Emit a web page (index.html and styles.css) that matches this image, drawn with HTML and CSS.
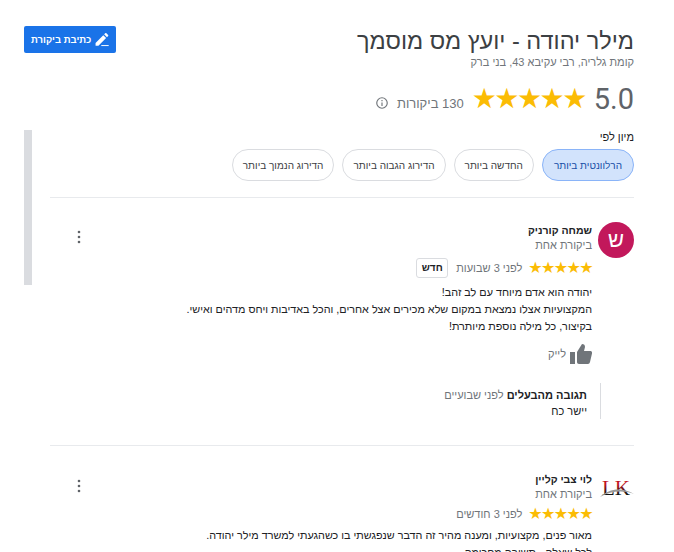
FILE: index.html
```html
<!DOCTYPE html>
<html lang="he" dir="rtl">
<head>
    <meta charset="UTF-8">
    <meta name="viewport" content="width=device-width, initial-scale=1.0">
    <title>מילר יהודה - ביקורות</title>
    <link rel="stylesheet" href="styles.css">
</head>
<body>

<div class="scroll-thumb"></div>

<div class="page">
    <header class="header">
        <div class="business">
            <h1 class="business-name">מילר יהודה - יועץ מס מוסמך</h1>
            <div class="business-address">קומת גלריה, רבי עקיבא 43, בני ברק</div>
            <div class="summary">
                <span class="score">5.0</span>
                <span class="stars stars-big">★★★★★</span>
                <span class="count">130 ביקורות</span>
                <svg class="info" width="14" height="14" viewBox="0 0 24 24" fill="#70757a"><path d="M11 7h2v2h-2zm0 4h2v6h-2zm1-9a10 10 0 1 0 0 20 10 10 0 0 0 0-20zm0 18a8 8 0 1 1 0-16 8 8 0 0 1 0 16z"/></svg>
            </div>
        </div>
        <a class="write-btn" href="#">
            <svg width="15" height="15" viewBox="0 0 24 24" fill="#fff"><path d="M1 23v-5L14.500 4.500l5 5L6 23zM16 3l2-2c.6-.6 1.400-.6 2 0l3 3c.6.600.6 1.400 0 2l-2 2z"/><path d="M11 21.800h13V23.500H11z"/></svg>
            <span>כתיבת ביקורת</span>
        </a>
    </header>

    <section class="sort">
        <div class="sort-label">מיון לפי</div>
        <div class="chips">
            <button class="chip chip-active">הרלוונטית ביותר</button>
            <button class="chip">החדשה ביותר</button>
            <button class="chip">הדירוג הגבוה ביותר</button>
            <button class="chip">הדירוג הנמוך ביותר</button>
        </div>
    </section>

    <article class="review">
        <div class="review-head">
            <div class="avatar avatar-letter">ש</div>
            <div class="review-meta">
                <div class="author">שמחה קורניק</div>
                <div class="author-sub">ביקורת אחת</div>
                <div class="rating-row">
                    <span class="stars">★★★★★</span>
                    <span class="when">לפני 3 שבועות</span>
                    <span class="new-badge">חדש</span>
                </div>
            </div>
            <svg class="more" width="4" height="14" viewBox="0 0 4 14" fill="#5f6368"><circle cx="2" cy="2" r="1.300"/><circle cx="2" cy="7" r="1.300"/><circle cx="2" cy="12" r="1.300"/></svg>
        </div>
        <p class="review-text">יהודה הוא אדם מיוחד עם לב זהב!<br>המקצועיות אצלו נמצאת במקום שלא מכירים אצל אחרים, והכל באדיבות ויחס מדהים ואישי.<br>בקיצור, כל מילה נוספת מיותרת!</p>
        <div class="like">
            <svg width="22" height="20" viewBox="0 0 22 20" fill="#70757a"><path d="M0 8h5v12H0zM7 8l5-8c2 0 3 1 3 3l-1 4h6c1.500 0 2.300 1 2 2.500l-2 8.500c-.3 1-1 2-2 2H9c-1.200 0-2-1-2-2z"/></svg>
            <span>לייק</span>
        </div>
        <div class="owner-reply">
            <div><b>תגובה מהבעלים</b> <span class="when">לפני שבועיים</span></div>
            <div>יישר כח</div>
        </div>
    </article>

    <article class="review">
        <div class="review-head">
            <div class="avatar avatar-logo">
                <svg width="36" height="36" viewBox="0 0 36 36">
                    <defs>
                        <linearGradient id="lk-fill" x1="0" y1="0" x2="0" y2="1">
                            <stop offset="0.350" stop-color="#c1121f"/>
                            <stop offset="0.750" stop-color="#111"/>
                        </linearGradient>
                    </defs>
                    <text x="18" y="24" text-anchor="middle" direction="ltr" font-family="Liberation Serif, serif" font-size="21" fill="url(#lk-fill)">LK</text>
                    <path d="M2 26C11 17 25 16 36 23C25 19 13 20 2 26z" fill="#999"/>
                </svg>
            </div>
            <div class="review-meta">
                <div class="author">לוי צבי קליין</div>
                <div class="author-sub">ביקורת אחת</div>
                <div class="rating-row">
                    <span class="stars">★★★★★</span>
                    <span class="when">לפני 3 חודשים</span>
                </div>
            </div>
            <svg class="more" width="4" height="14" viewBox="0 0 4 14" fill="#5f6368"><circle cx="2" cy="2" r="1.300"/><circle cx="2" cy="7" r="1.300"/><circle cx="2" cy="12" r="1.300"/></svg>
        </div>
        <p class="review-text">מאור פנים, מקצועיות, ומענה מהיר זה הדבר שנפגשתי בו כשהגעתי למשרד מילר יהודה.<br>לכל שאלה - תשובה מחכימה.</p>
    </article>
</div>

</body>
</html>
```

FILE: styles.css
```css
html, body {
    height: 552px;
    margin: 0;
    overflow: hidden;
    background-color: white;
}
body {
    font-family: "Liberation Sans", Arial, sans-serif;
    font-size: 11px;
    color: #3c4043;
}
.page {
    padding: 26px 40px 0 24px;
}
.scroll-thumb {
    position: absolute;
    left: 24px;
    top: 130px;
    width: 8px;
    height: 155px;
    background-color: #dadce0;
}
.header {
    display: flex;
    justify-content: space-between;
    align-items: flex-start;
}
.business-name {
    margin: 3px 0 0;
    font-size: 23.500px;
    line-height: 24px;
    font-weight: normal;
    color: #3c4043;
}
.business-address {
    margin-top: 1px;
    font-size: 11px;
    line-height: 16px;
    color: #70757a;
}
.summary {
    display: flex;
    align-items: center;
    margin-top: 12px;
    height: 34px;
}
.score {
    font-family: Roboto, sans-serif;
    font-size: 29px;
    color: #5f6368;
    direction: ltr;
    margin-left: 9px;
}
.stars {
    color: #fbbc04;
    font-family: "DejaVu Sans", sans-serif;
    font-size: 16px;
    line-height: 14px;
    letter-spacing: -1.600px;
}
.stars-big {
    font-size: 28px;
    line-height: 26px;
    letter-spacing: -2.500px;
    margin-left: 8px;
}
.count {
    font-size: 13px;
    color: #70757a;
    margin: 8px 0 0 8px;
}
.info {
    margin-top: 8px;
}
.write-btn {
    display: flex;
    align-items: center;
    gap: 4px;
    height: 27px;
    width: 92px;
    box-sizing: border-box;
    padding: 0 7px;
    background-color: #1a73e8;
    border-radius: 2px;
    color: white;
    font-size: 9.500px;
    font-weight: bold;
    white-space: nowrap;
    text-decoration: none;
}
.sort {
    margin: 14px 0 0 26px;
    padding-bottom: 16px;
    border-bottom: 1px solid #e8eaed;
}
.sort-label {
    font-size: 11px;
    line-height: 14px;
    color: #202124;
    margin-bottom: 5px;
}
.chips {
    display: flex;
    gap: 8px;
}
.chip {
    height: 32px;
    padding: 0 10px;
    background-color: white;
    border: 1px solid #dadce0;
    border-radius: 16px;
    font-family: inherit;
    font-size: 10px;
    color: #3c4043;
}
.chip-active {
    padding: 0 11px;
    background-color: #d2e3fc;
    border-color: #8ab4f8;
    color: #174ea6;
}
.review {
    margin-left: 26px;
    padding: 24px 0 0;
}
.review + .review {
    border-top: 1px solid #e8eaed;
    margin-top: 26px;
    padding-top: 25px;
}
.review-head {
    display: flex;
    align-items: flex-start;
}
.avatar {
    flex: none;
    width: 36px;
    height: 36px;
    margin-left: 6px;
}
.avatar-letter {
    border-radius: 50%;
    background-color: #c2185b;
    color: white;
    font-size: 22px;
    line-height: 36px;
    text-align: center;
}
.review-meta {
    flex: 1;
}
.author {
    font-size: 10.500px;
    line-height: 16px;
    font-weight: bold;
    color: #202124;
}
.author-sub {
    font-size: 11px;
    line-height: 14px;
    color: #70757a;
}
.rating-row {
    display: flex;
    align-items: center;
    gap: 6px;
    margin-top: 6px;
}
.when {
    color: #70757a;
}
.new-badge {
    width: 30px;
    height: 18px;
    margin-right: 2px;
    line-height: 18px;
    text-align: center;
    border: 1px solid #dadce0;
    border-radius: 3px;
    font-size: 10px;
    font-weight: bold;
    color: #202124;
}
.more {
    margin: 8px 0 0 27px;
}
.review-text {
    margin: 6px 42px 0 0;
    font-size: 10.800px;
    line-height: 17px;
    color: #202124;
}
.like {
    display: flex;
    align-items: center;
    gap: 4px;
    margin: 9px 42px 0 0;
    color: #70757a;
}
.owner-reply {
    margin: 19px 33px 0 0;
    padding: 4px 13px 0 0;
    border-right: 1px solid #dadce0;
    line-height: 16px;
    color: #202124;
}
.owner-reply b {
    font-weight: bold;
}
```
